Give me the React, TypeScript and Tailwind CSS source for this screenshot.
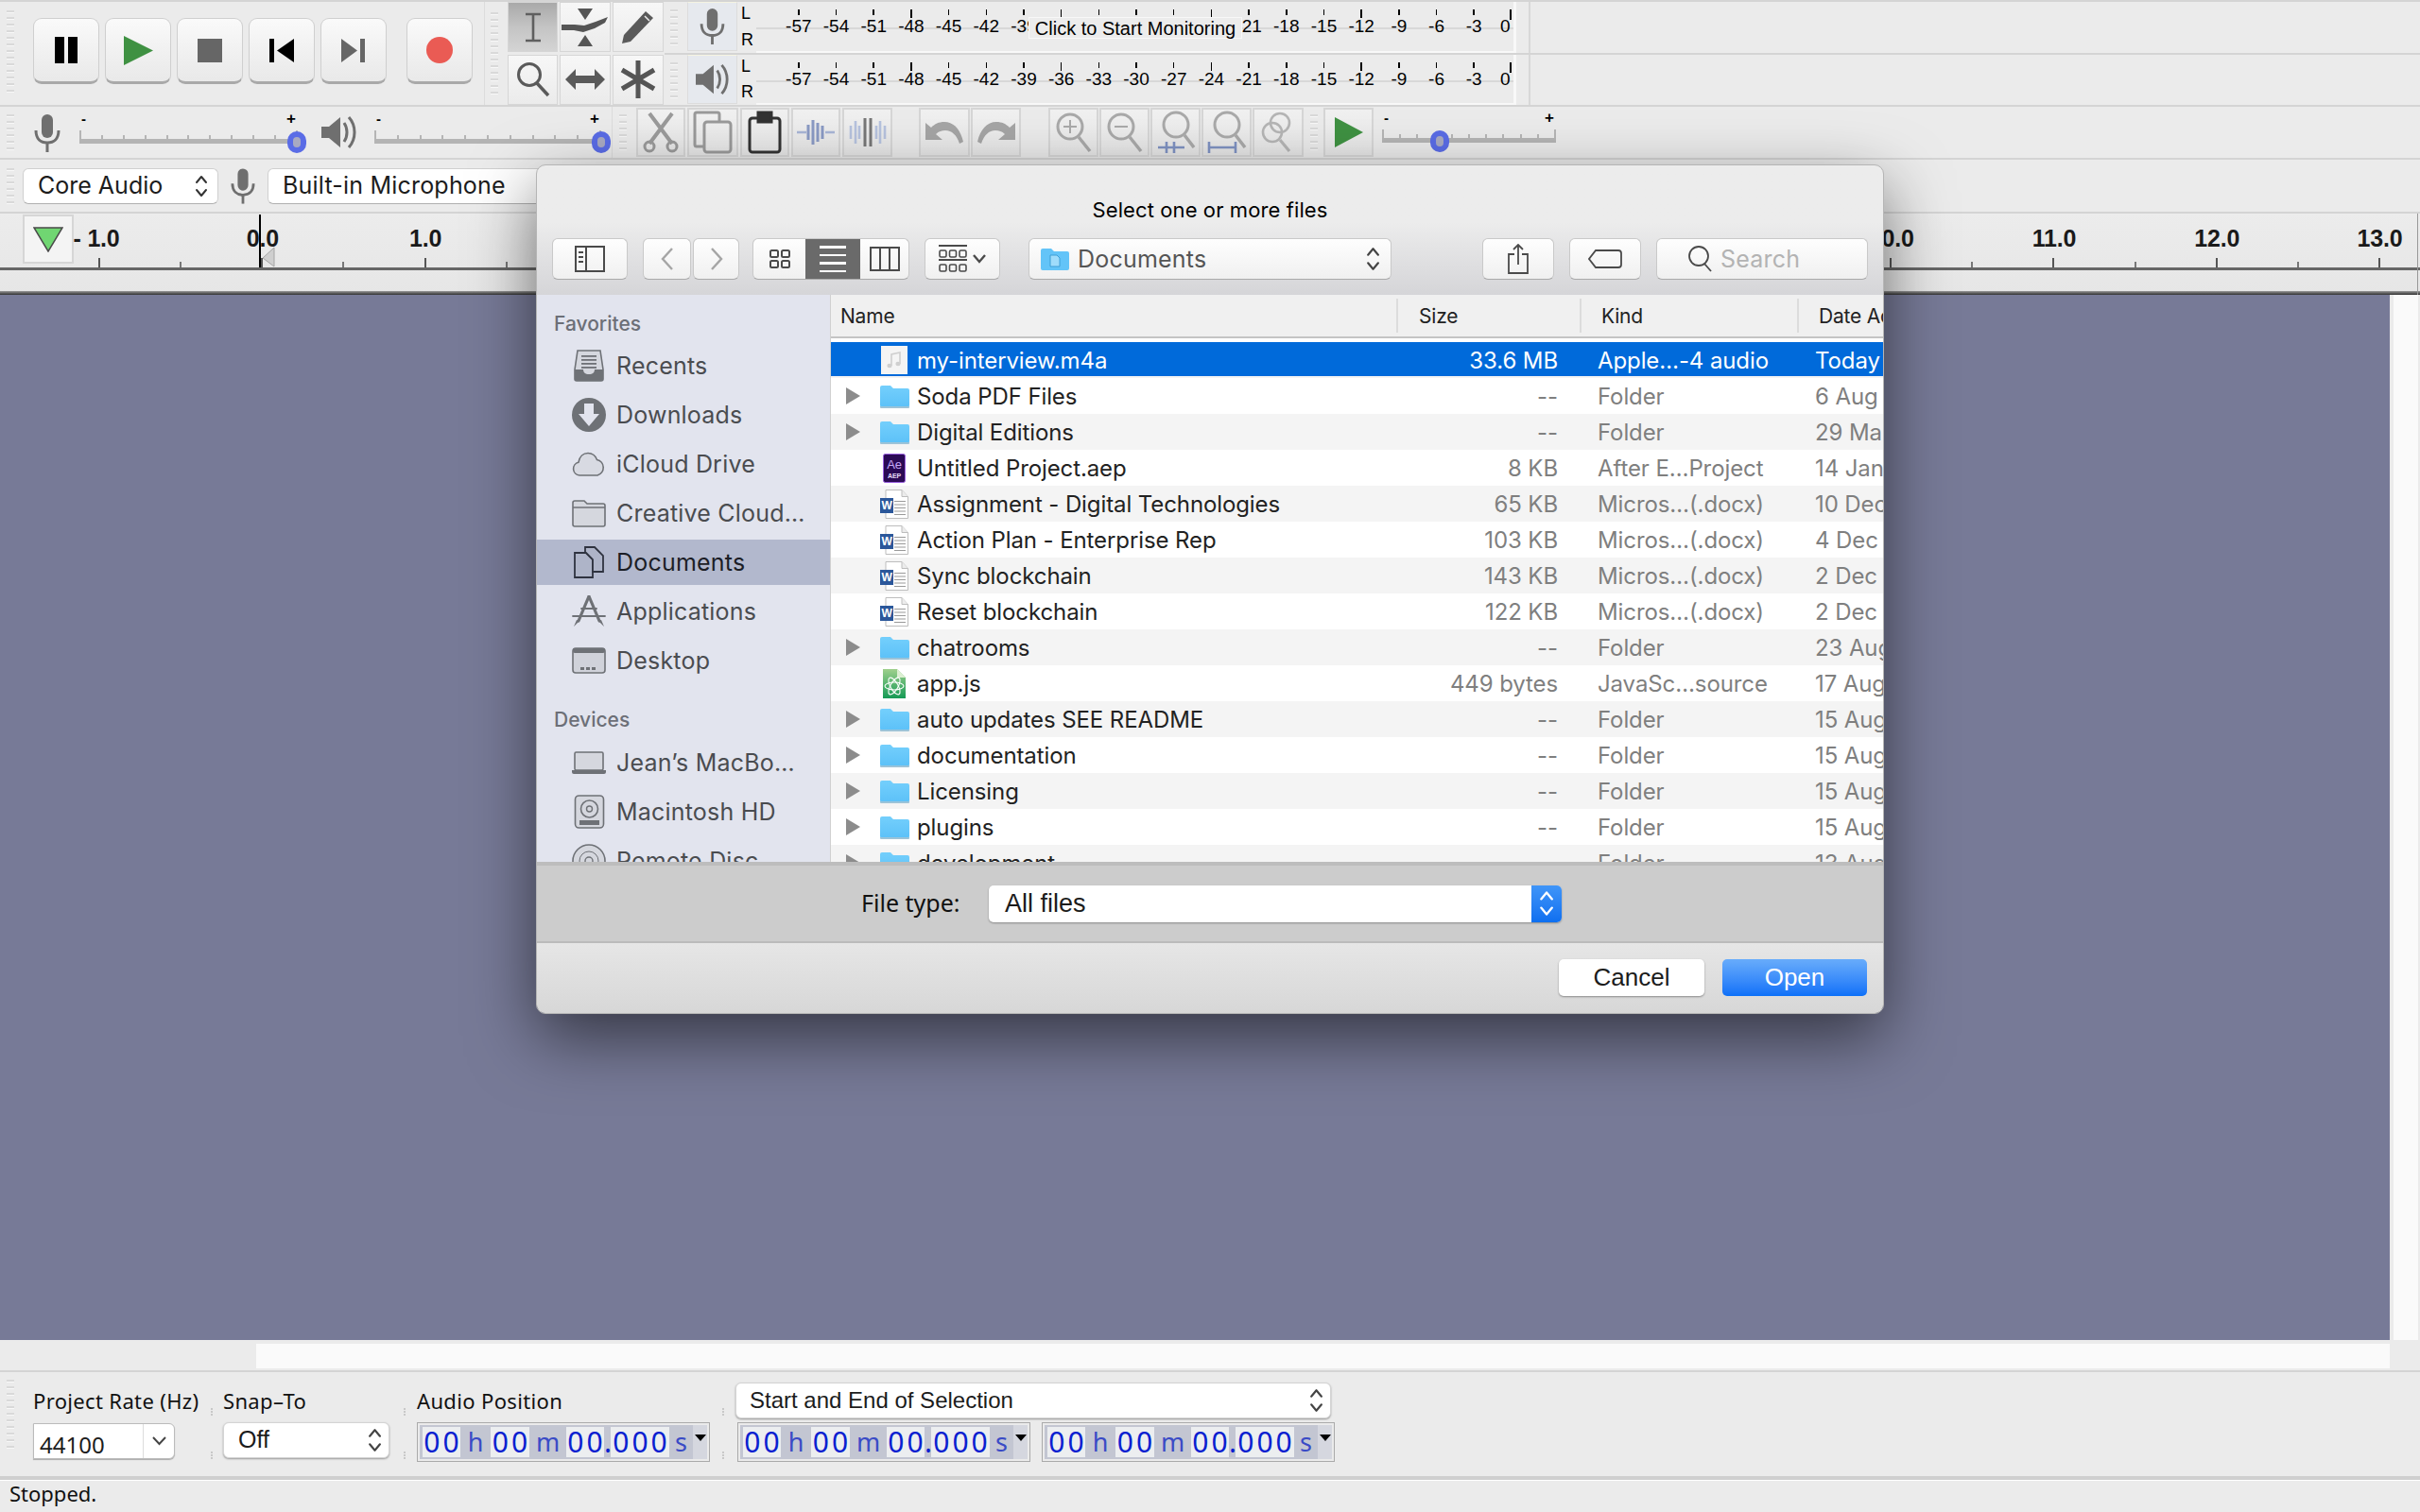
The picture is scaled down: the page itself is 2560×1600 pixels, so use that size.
import React from 'react'

const sans = "font-['Inter',sans-serif]"
const arial = "font-['Liberation_Sans',sans-serif]"
const noto = "font-['Noto_Sans',sans-serif]"

function Grip({ n = 12, className = '' }: { n?: number; className?: string }) {
  return (
    <div className={`flex flex-col gap-[4px] w-[8px] shrink-0 ${className}`}>
      {Array.from({ length: n }).map((_, i) => (
        <div key={i} className="h-[3px] w-[8px] bg-[#d9d9d9] border-b border-[#f8f8f8]" />
      ))}
    </div>
  )
}

function Mic({ w = 28, h = 40, color = '#6f6f6f' }: { w?: number; h?: number; color?: string }) {
  return (
    <svg width={w} height={h} viewBox="0 0 28 40">
      <rect x="8" y="0" width="12" height="25" rx="6" fill={color} />
      <path d="M2 17c0 9 5 13 12 13s12-4 12-13" fill="none" stroke={color} strokeWidth="3" />
      <rect x="12.5" y="29" width="3" height="11" fill={color} />
    </svg>
  )
}

function Speaker({ w = 38, h = 36 }: { w?: number; h?: number }) {
  return (
    <svg width={w} height={h} viewBox="0 0 38 36">
      <path d="M0 12h8l12-10v32L8 24H0z" fill="#6f6f6f" />
      <path d="M24 8c4 6 4 14 0 20" fill="none" stroke="#6f6f6f" strokeWidth="3" />
      <path d="M29 2c8 9 8 23 0 32" fill="none" stroke="#6f6f6f" strokeWidth="3" />
    </svg>
  )
}

function TransportBtn({ children, className = '' }: { children: React.ReactNode; className?: string }) {
  return (
    <div className={`w-[70px] h-[70px] rounded-[9px] border border-[#cfcfcf] border-b-[3px] border-b-[#a9a9a9] bg-gradient-to-b from-[#fafafa] via-[#f1f1f1] to-[#e9e9e9] flex items-center justify-center shrink-0 ${className}`}>
      {children}
    </div>
  )
}

function ToolBtn({ children, active }: { children: React.ReactNode; active?: boolean }) {
  return (
    <div className={`h-[53px] flex items-center justify-center border border-[#d6d6d6] ${active ? 'bg-gradient-to-b from-[#a9a9a9] via-[#c4c4c4] to-[#d4d4d4]' : 'bg-gradient-to-b from-[#f7f7f7] to-[#ebebeb]'}`}>
      {children}
    </div>
  )
}

function EditBtn({ children, w = 'w-[52px]' }: { children: React.ReactNode; w?: string }) {
  return (
    <div className={`${w} h-[52px] shrink-0 flex items-center justify-center border-[2px] border-[#d6d6d6] bg-gradient-to-b from-[#f1f1f1] to-[#e6e6e6]`}>
      {children}
    </div>
  )
}

function Slider({ width, thumb, className = '' }: { width: number; thumb: number; className?: string }) {
  return (
    <div className={`relative h-[52px] shrink-0 ${className}`} style={{ width }}>
      <span className={`absolute left-[2px] top-[2px] text-[15px] font-bold leading-[20px] text-black ${arial}`}>-</span>
      <span className={`absolute right-[2px] top-[2px] text-[17px] font-bold leading-[20px] text-black ${arial}`}>+</span>
      <div className="absolute left-0 right-0 top-[23px] h-[10px] flex justify-between items-end">
        {Array.from({ length: 11 }).map((_, i) => (
          <div key={i} className={`w-[2px] bg-[#b5b5b5] ${i === 0 || i === 10 ? 'h-[9px]' : 'h-[4px]'}`} />
        ))}
      </div>
      <div className="absolute left-0 right-0 top-[33px] h-[5px] bg-[#b4b4b4]" />
      <div className="absolute top-[25px] w-[20px] h-[23px] rounded-full border-[6px] border-[#5a6ce6] bg-[#a9aac2]" style={{ left: thumb - 10 }} />
    </div>
  )
}

const meterLabels = ['-57', '-54', '-51', '-48', '-45', '-42', '-39', '-36', '-33', '-30', '-27', '-24', '-21', '-18', '-15', '-12', '-9', '-6', '-3']
const hiddenByMonitor = ['-36', '-33', '-30', '-27', '-24']

function MeterRow({ icon, monitor }: { icon: React.ReactNode; monitor?: boolean }) {
  return (
    <div className="flex h-[54px] items-stretch">
      <Grip n={6} className="ml-[6px] mr-[10px] self-center" />
      <div className="w-[53px] h-[52px] bg-[#e6e9ee] border border-[#dcdcdc] border-t-[#f5f3e2] flex items-center justify-center shrink-0">{icon}</div>
      <div className={`w-[20px] pl-[4px] flex flex-col justify-between pb-[2px] text-[18px] leading-[24px] text-black shrink-0 ${arial}`}>
        <span>L</span>
        <span>R</span>
      </div>
      <div className="relative w-[804px] border-r-[3px] border-b-[2px] border-[#f8f8f8] shrink-0">
        <div className="absolute left-0 right-0 top-[27px] h-[2px] bg-[#d8d8d8]" />
        <div className="relative flex pl-[25px] pt-[8px]">
          {meterLabels.map((m, i) => (
            <div key={m} className="w-[39.7px] flex flex-col items-center shrink-0">
              <div className={`w-[1.5px] bg-black ${i % 4 === 3 ? 'h-[9px]' : 'h-[6px] mb-[3px]'}`} />
              <span className={`h-[20px] text-[19px] leading-[20px] text-black -mt-[1px] whitespace-nowrap ${arial}`}>
                {monitor && hiddenByMonitor.includes(m) ? '' : m}
              </span>
            </div>
          ))}
          <div className="w-[30px] flex flex-col items-start shrink-0">
            <div className="w-[2px] h-[11px] -mb-[2px] ml-[18px] bg-black" />
            <span className={`text-[19px] leading-[20px] text-black -mt-[1px] ml-[8px] ${arial}`}>0</span>
          </div>
        </div>
        {monitor && (
          <div className={`absolute left-[288px] top-[16px] w-[226px] h-[23px] bg-[#ececec] border border-[#f8f8f8] flex items-center justify-center text-[20px] text-black whitespace-nowrap ${arial}`}>
            Click to Start Monitoring
          </div>
        )}
      </div>
      <div className="w-[15px] border-r-[2px] border-[#d8d8d8] shrink-0" />
    </div>
  )
}

function SelectChevrons({ size = 'h-[26px]', color = '#444' }: { size?: string; color?: string }) {
  return (
    <svg viewBox="0 0 14 26" className={`${size} w-auto shrink-0`}>
      <path d="M2 9l5-6 5 6M2 17l5 6 5-6" fill="none" stroke={color} strokeWidth="2" strokeLinecap="round" strokeLinejoin="round" />
    </svg>
  )
}

const rulerCells: { label?: string }[] = []
for (let i = 0; i < 29; i++) {
  if (i % 2 === 0) {
    const v = i / 2 - 1
    rulerCells.push({ label: v === -1 ? '- 1.0' : `${v}.0` })
  } else rulerCells.push({})
}

function Ruler() {
  return (
    <div className="relative h-[86px] shrink-0 bg-gradient-to-b from-[#ececec] to-[#e6e6e6] overflow-hidden">
      <div className="flex pl-[62px] h-[57px]">
        {rulerCells.map((c, i) => (
          <div key={i} className="w-[86.15px] h-full flex flex-col items-center justify-between shrink-0">
            {c.label ? (
              <span className={`mt-[14px] text-[25px] leading-[24px] font-bold text-[#1a1a1a] whitespace-nowrap tracking-[-0.2px] ${arial} ${c.label === '- 1.0' ? '-ml-[6px]' : 'ml-[1px]'}`}>{c.label}</span>
            ) : (
              <span />
            )}
            <div className={`${c.label ? 'h-[10px] bg-[#555]' : 'h-[6px] bg-[#777]'} w-[2px]`} />
          </div>
        ))}
      </div>
      <div className="h-[3px] bg-[#666]" />
      <div className="absolute left-0 right-0 bottom-0 h-[4px] bg-gradient-to-b from-[#999] to-[#333]" />
      <div className="absolute right-[2px] top-0 bottom-0 w-[1px] bg-[#999]" />
      {/* green play-head button */}
      <div className="absolute left-[24px] top-[1px] w-[54px] h-[52px] border-[2px] border-[#d6d6d6] bg-[#f4f4f4] flex items-center justify-center">
        <svg width="32" height="27" viewBox="0 0 32 27">
          <path d="M1 1h30L16 26z" fill="#70d672" stroke="#4a4a4a" strokeWidth="1.5" />
        </svg>
      </div>
      {/* cursor */}
      <div className="absolute left-[274px] top-[1px] w-[2px] h-[56px] bg-black" />
      <svg className="absolute left-[277px] top-[35px]" width="14" height="22" viewBox="0 0 14 22">
        <path d="M13 1v20L1 12z" fill="#cfcfcf" stroke="#a5a5a5" />
      </svg>
    </div>
  )
}

function Digits({ text, w }: { text: string; w: string }) {
  return (
    <div className={`${w} h-[32px] bg-[#eceef0] shrink-0 flex items-center justify-center text-[30px] leading-[32px] tracking-[3px] pl-[3px] text-[#0a1fd0] ${noto}`}>
      {text}
    </div>
  )
}

function Unit({ text, w }: { text: string; w: string }) {
  return <div className={`${w} shrink-0 text-center text-[27px] leading-[32px] text-[#3a4bc6] ${noto}`}>{text}</div>
}

function Numeric() {
  return (
    <div className="w-[310px] h-[42px] border border-[#aaa] p-[2px] shrink-0">
      <div className="h-full bg-[#c3c6d2] flex items-center pl-[3px] pr-[2px]">
        <Digits text="00" w="w-[40px]" />
        <Unit text="h" w="w-[32px]" />
        <Digits text="00" w="w-[41px]" />
        <Unit text="m" w="w-[39px]" />
        <Digits text="00" w="w-[40px]" />
        <div className={`w-[7px] shrink-0 text-[30px] leading-[32px] text-center text-[#0a1fd0] ${noto}`}>.</div>
        <Digits text="000" w="w-[62px]" />
        <Unit text="s" w="w-[25px]" />
        <div className="w-[15px] h-full bg-[#d5d7df] flex justify-center pt-[10px] shrink-0">
          <div className="w-0 h-0 border-x-[6px] border-x-transparent border-t-[7px] border-t-black" />
        </div>
      </div>
    </div>
  )
}

function SmallSep() {
  return (
    <div className="flex flex-col justify-between h-[54px] w-[2px] mt-[27px] shrink-0">
      <div className="h-[8px] border-l-2 border-dotted border-[#c8c8c8]" />
      <div className="h-[8px] border-l-2 border-dotted border-[#c8c8c8]" />
    </div>
  )
}

/* dialog icons */
function Folder() {
  return (
    <svg width="31" height="25" viewBox="0 0 31 25">
      <defs>
        <linearGradient id="fold" x1="0" y1="0" x2="0" y2="1">
          <stop offset="0" stopColor="#74cffc" />
          <stop offset="1" stopColor="#5cc1f8" />
        </linearGradient>
      </defs>
      <path d="M0 3a2 2 0 0 1 2-2h9l3 3h15a2 2 0 0 1 2 2v16a2 2 0 0 1-2 2H2a2 2 0 0 1-2-2z" fill="url(#fold)" />
      <path d="M0 23h31v1a1 1 0 0 1-1 1H1a1 1 0 0 1-1-1z" fill="#9cc3d8" />
    </svg>
  )
}

function WordIcon() {
  return (
    <svg width="30" height="31" viewBox="0 0 30 31">
      <path d="M6 .5h17l6.5 7v23H6z" fill="#fff" stroke="#bdbdbd" />
      <path d="M23 .5v7h6.5" fill="#ececec" stroke="#bdbdbd" />
      {[12, 15.5, 19, 22.5, 26].map((y) => (
        <rect key={y} x="15" y={y} width="12" height="1" fill="#9a9a9a" />
      ))}
      <rect x="0" y="9" width="14" height="16" fill="#2b579a" />
      <text x="7" y="21" textAnchor="middle" fontSize="12" fontWeight="700" fill="#fff" fontFamily="Liberation Sans">W</text>
    </svg>
  )
}

function AeIcon() {
  return (
    <svg width="24" height="31" viewBox="0 0 24 31">
      <rect x="0.5" y="0.5" width="23" height="30" rx="2" fill="#2b0a55" stroke="#9a5fe0" />
      <text x="12" y="16" textAnchor="middle" fontSize="13" fill="#c6a8f5" fontFamily="Liberation Sans">Ae</text>
      <text x="12" y="26" textAnchor="middle" fontSize="7" fontWeight="700" fill="#e8dcf8" fontFamily="Liberation Sans">AEP</text>
    </svg>
  )
}

function AtomIcon() {
  return (
    <svg width="24" height="31" viewBox="0 0 24 31">
      <defs>
        <linearGradient id="atom" x1="0" y1="0" x2="0" y2="1">
          <stop offset="0" stopColor="#9fd08c" />
          <stop offset="1" stopColor="#159a55" />
        </linearGradient>
      </defs>
      <path d="M0 0h15l9 9v22H0z" fill="url(#atom)" />
      <path d="M15 0l9 9h-9z" fill="#dcefd2" />
      <g fill="none" stroke="#fff" strokeWidth="1.1">
        <ellipse cx="12" cy="18" rx="10" ry="4" />
        <ellipse cx="12" cy="18" rx="10" ry="4" transform="rotate(60 12 18)" />
        <ellipse cx="12" cy="18" rx="10" ry="4" transform="rotate(120 12 18)" />
      </g>
    </svg>
  )
}

function MusicIcon() {
  return (
    <svg width="28" height="30" viewBox="0 0 28 30">
      <rect width="28" height="30" fill="#f4f4f4" />
      <path d="M11 21V9l9-2v12" fill="none" stroke="#cfcfcf" strokeWidth="1.6" />
      <ellipse cx="9" cy="21" rx="2.6" ry="2.2" fill="#cfcfcf" />
      <ellipse cx="18" cy="19" rx="2.6" ry="2.2" fill="#cfcfcf" />
    </svg>
  )
}

type Row = { name: string; size: string; kind: string; date: string; icon: 'folder' | 'word' | 'ae' | 'atom' | 'music' }

const rows: Row[] = [
  { name: 'my-interview.m4a', size: '33.6 MB', kind: 'Apple…-4 audio', date: 'Today', icon: 'music' },
  { name: 'Soda PDF Files', size: '--', kind: 'Folder', date: '6 Aug', icon: 'folder' },
  { name: 'Digital Editions', size: '--', kind: 'Folder', date: '29 Mar', icon: 'folder' },
  { name: 'Untitled Project.aep', size: '8 KB', kind: 'After E…Project', date: '14 Jan', icon: 'ae' },
  { name: 'Assignment - Digital Technologies', size: '65 KB', kind: 'Micros…(.docx)', date: '10 Dec', icon: 'word' },
  { name: 'Action Plan - Enterprise Rep', size: '103 KB', kind: 'Micros…(.docx)', date: '4 Dec', icon: 'word' },
  { name: 'Sync blockchain', size: '143 KB', kind: 'Micros…(.docx)', date: '2 Dec', icon: 'word' },
  { name: 'Reset blockchain', size: '122 KB', kind: 'Micros…(.docx)', date: '2 Dec', icon: 'word' },
  { name: 'chatrooms', size: '--', kind: 'Folder', date: '23 Aug', icon: 'folder' },
  { name: 'app.js', size: '449 bytes', kind: 'JavaSc…source', date: '17 Aug', icon: 'atom' },
  { name: 'auto updates SEE README', size: '--', kind: 'Folder', date: '15 Aug', icon: 'folder' },
  { name: 'documentation', size: '--', kind: 'Folder', date: '15 Aug', icon: 'folder' },
  { name: 'Licensing', size: '--', kind: 'Folder', date: '15 Aug', icon: 'folder' },
  { name: 'plugins', size: '--', kind: 'Folder', date: '15 Aug', icon: 'folder' },
  { name: 'development', size: '--', kind: 'Folder', date: '13 Aug', icon: 'folder' },
]

function FileIcon({ kind }: { kind: Row['icon'] }) {
  if (kind === 'folder') return <Folder />
  if (kind === 'word') return <WordIcon />
  if (kind === 'ae') return <AeIcon />
  if (kind === 'atom') return <AtomIcon />
  return <MusicIcon />
}

const sg = '#6e7176'

const sideIcons: Record<string, React.ReactNode> = {
  Recents: (
    <svg width="34" height="34" viewBox="0 0 34 34">
      <path d="M5 1h24l3 20v10a2 2 0 0 1-2 2H4a2 2 0 0 1-2-2V21z" fill="#d5d7de" stroke={sg} strokeWidth="1.6" />
      <path d="M2 21h9c0 3 2 5 6 5s6-2 6-5h9v10a2 2 0 0 1-2 2H4a2 2 0 0 1-2-2z" fill={sg} />
      {[6, 10, 14, 18].map((y) => (
        <rect key={y} x="9" y={y} width="16" height="1.8" fill={sg} />
      ))}
    </svg>
  ),
  Downloads: (
    <svg width="36" height="36" viewBox="0 0 36 36">
      <circle cx="18" cy="18" r="18" fill={sg} />
      <path d="M13 6h10v11h6L18 30 7 17h6z" fill="#e2e4ee" />
    </svg>
  ),
  'iCloud Drive': (
    <svg width="36" height="26" viewBox="0 0 36 26">
      <path d="M8 25a7 7 0 0 1-1-13.8C8 5 12 1.5 17 1.5c5 0 8 3 9.5 7A8.5 8.5 0 0 1 27 25z" fill="#d8dae2" stroke={sg} strokeWidth="1.6" />
    </svg>
  ),
  'Creative Cloud…': (
    <svg width="36" height="29" viewBox="0 0 36 29">
      <path d="M1 3a2 2 0 0 1 2-2h10l3 3h17a2 2 0 0 1 2 2v20a2 2 0 0 1-2 2H3a2 2 0 0 1-2-2z" fill="#d5d7de" stroke={sg} strokeWidth="1.6" />
      <path d="M1 8h34" stroke={sg} strokeWidth="1.4" />
    </svg>
  ),
  Documents: (
    <svg width="33" height="34" viewBox="0 0 33 34">
      <path d="M1 7h12l7 7v19H1z" fill="#aeb4c8" stroke="#2f3340" strokeWidth="1.8" />
      <path d="M12 1h10l9 9v17H20V14l-7-7h-1z" fill="#aeb4c8" stroke="#2f3340" strokeWidth="1.8" />
    </svg>
  ),
  Applications: (
    <svg width="36" height="34" viewBox="0 0 36 34">
      <g fill="none" stroke={sg} strokeLinecap="round">
        <path d="M18 1L7 27M18 1l11 26" strokeWidth="3.2" />
        <path d="M1 22h34" strokeWidth="1.8" />
        <path d="M10 14h16" strokeWidth="1.8" />
      </g>
      <path d="M2 33l3-7 3 1zM34 33l-3-7-3 1z" fill={sg} />
    </svg>
  ),
  Desktop: (
    <svg width="36" height="28" viewBox="0 0 36 28">
      <rect x="1" y="1" width="34" height="26" rx="3" fill="#d0d2da" stroke={sg} strokeWidth="1.6" />
      <rect x="1" y="1" width="34" height="5" rx="2" fill={sg} />
      <rect x="9" y="21" width="4" height="3" fill={sg} />
      <rect x="15" y="21" width="4" height="3" fill={sg} />
      <rect x="21" y="21" width="4" height="3" fill={sg} />
    </svg>
  ),
  'Jean’s MacBo…': (
    <svg width="36" height="24" viewBox="0 0 36 24">
      <rect x="3" y="1" width="30" height="19" rx="1.5" fill="#d5d7de" stroke={sg} strokeWidth="1.6" />
      <path d="M0 20h36v2a2 2 0 0 1-2 2H2a2 2 0 0 1-2-2z" fill={sg} />
    </svg>
  ),
  'Macintosh HD': (
    <svg width="33" height="36" viewBox="0 0 33 36">
      <rect x="1.5" y="1" width="30" height="34" rx="4" fill="#d5d7de" stroke={sg} strokeWidth="1.6" />
      <circle cx="16.5" cy="15" r="9" fill="none" stroke={sg} strokeWidth="1.6" />
      <circle cx="16.5" cy="15" r="3" fill="none" stroke={sg} strokeWidth="1.4" />
      <rect x="6" y="27" width="21" height="5" fill={sg} />
    </svg>
  ),
  'Remote Disc': (
    <svg width="36" height="36" viewBox="0 0 36 36">
      <circle cx="18" cy="18" r="17" fill="#d5d7de" stroke={sg} strokeWidth="1.6" />
      <circle cx="18" cy="18" r="10" fill="none" stroke={sg} strokeWidth="1" />
      <circle cx="18" cy="18" r="4" fill="none" stroke={sg} strokeWidth="1.4" />
    </svg>
  ),
}

function SideItem({ name, active }: { name: string; active?: boolean }) {
  return (
    <div className="h-[52px] flex items-center shrink-0">
      <div className={`h-[48px] w-full flex items-center ${active ? 'bg-[#b2b8cd] text-[#1c1e26]' : 'text-[#4a4c50]'}`}>
        <div className="w-[36px] ml-[37px] flex justify-center">{sideIcons[name]}</div>
        <span className={`ml-[11px] mt-[1px] text-[25px] tracking-[0.2px] whitespace-nowrap ${sans}`}>{name}</span>
      </div>
    </div>
  )
}

const dlgBtn = 'h-[44px] rounded-[6px] border border-[#c9c9c9] border-b-[#aaa] bg-gradient-to-b from-[#fefefe] to-[#f0f0f0] flex items-center justify-center shrink-0'

function FileDialog() {
  return (
    <div className={`absolute left-[568px] top-[175px] w-[1424px] h-[897px] rounded-[9px] overflow-hidden flex flex-col bg-[#ececec] shadow-[0_25px_70px_0_rgba(0,0,0,0.56)] outline outline-1 outline-[#b5b5b5] ${sans}`}>
      {/* title + toolbar */}
      <div className="h-[137px] shrink-0 bg-gradient-to-b from-[#ececec] from-[44%] to-[#d5d5d8] flex flex-col">
        <div className="h-[77px] shrink-0 pt-[33px] text-center text-[22px] leading-[28px] tracking-[0.1px] text-black">Select one or more files</div>
        <div className="flex pl-[16px]">
          <div className={`${dlgBtn} w-[80px]`}>
            <svg width="32" height="28" viewBox="0 0 32 28" fill="none" stroke="#4a4a4a" strokeWidth="2">
              <rect x="1" y="1" width="30" height="26" />
              <path d="M12 1v26M4 7h5M4 12h5M4 17h5" />
            </svg>
          </div>
          <div className={`${dlgBtn} w-[51px] ml-[16px]`}>
            <svg width="14" height="26" viewBox="0 0 14 26" fill="none" stroke="#a5a5a5" strokeWidth="2.4">
              <path d="M12 2L2 13l10 11" />
            </svg>
          </div>
          <div className={`${dlgBtn} w-[49px] ml-[2px]`}>
            <svg width="14" height="26" viewBox="0 0 14 26" fill="none" stroke="#a5a5a5" strokeWidth="2.4">
              <path d="M2 2l10 11L2 24" />
            </svg>
          </div>
          <div className={`${dlgBtn} w-[166px] ml-[14px] overflow-hidden !justify-start`}>
            <div className="w-[55px] flex justify-center">
              <svg width="22" height="22" viewBox="0 0 22 22" fill="none" stroke="#4a4a4a" strokeWidth="2">
                <rect x="1" y="2" width="8" height="7" rx="1.5" />
                <rect x="13" y="2" width="8" height="7" rx="1.5" />
                <rect x="1" y="13" width="8" height="7" rx="1.5" />
                <rect x="13" y="13" width="8" height="7" rx="1.5" />
              </svg>
            </div>
            <div className="w-[58px] h-full bg-[#6a6a6a] flex flex-col items-center justify-center gap-[6px]">
              <div className="w-[28px] h-[2.5px] bg-white" />
              <div className="w-[28px] h-[2.5px] bg-white" />
              <div className="w-[28px] h-[2.5px] bg-white" />
              <div className="w-[28px] h-[2.5px] bg-white" />
            </div>
            <div className="flex-1 flex justify-center">
              <svg width="32" height="26" viewBox="0 0 32 26" fill="none" stroke="#4a4a4a" strokeWidth="2">
                <rect x="1" y="1" width="30" height="24" />
                <path d="M11 1v24M21 1v24" />
              </svg>
            </div>
          </div>
          <div className={`${dlgBtn} w-[80px] ml-[16px] gap-[6px]`}>
            <svg width="30" height="30" viewBox="0 0 30 30" fill="none" stroke="#4a4a4a" strokeWidth="1.6">
              <path d="M0 1h30" strokeWidth="2" />
              <rect x="1" y="6" width="7" height="7" rx="1.5" />
              <rect x="11.5" y="6" width="7" height="7" rx="1.5" />
              <rect x="22" y="6" width="7" height="7" rx="1.5" />
              <path d="M0 16h30" strokeWidth="2" />
              <rect x="1" y="21" width="7" height="7" rx="1.5" />
              <rect x="11.5" y="21" width="7" height="7" rx="1.5" />
              <rect x="22" y="21" width="7" height="7" rx="1.5" />
            </svg>
            <svg width="14" height="10" viewBox="0 0 14 10" fill="none" stroke="#4a4a4a" strokeWidth="2.4">
              <path d="M1 1l6 7 6-7" />
            </svg>
          </div>
          <div className={`${dlgBtn} w-[384px] ml-[30px] !justify-start pl-[12px]`}>
            <svg width="30" height="24" viewBox="0 0 30 24">
              <path d="M0 3a2 2 0 0 1 2-2h9l3 3h14a2 2 0 0 1 2 2v16a2 2 0 0 1-2 2H2a2 2 0 0 1-2-2z" fill="#63c4f8" />
              <path d="M10 8h7l3 3v9H10z" fill="#9fdcfb" stroke="#3f9fd6" />
            </svg>
            <span className="ml-[9px] mt-[2px] text-[25px] text-[#555] tracking-[0.2px]">Documents</span>
            <div className="ml-auto mr-[11px]">
              <SelectChevrons size="h-[28px]" />
            </div>
          </div>
          <div className={`${dlgBtn} w-[76px] ml-[96px]`}>
            <svg width="22" height="32" viewBox="0 0 22 32" fill="none" stroke="#4a4a4a" strokeWidth="1.8">
              <path d="M7 11H1v20h20V11h-6" />
              <path d="M11 22V1M6 6l5-5 5 5" />
            </svg>
          </div>
          <div className={`${dlgBtn} w-[76px] ml-[16px]`}>
            <svg width="36" height="20" viewBox="0 0 36 20" fill="none" stroke="#4a4a4a" strokeWidth="1.8">
              <path d="M8 1h24a3 3 0 0 1 3 3v12a3 3 0 0 1-3 3H8l-7-9z" />
            </svg>
          </div>
          <div className={`${dlgBtn} w-[224px] ml-[16px] !justify-start pl-[33px]`}>
            <svg width="26" height="28" viewBox="0 0 26 28" fill="none" stroke="#4a4a4a" strokeWidth="1.8">
              <circle cx="11" cy="11" r="10" />
              <path d="M17 19l7 8" />
            </svg>
            <span className="ml-[8px] mt-[2px] text-[25px] text-[#b3b3b3] tracking-[0.2px]">Search</span>
          </div>
        </div>
      </div>

      {/* browser */}
      <div className="h-[600px] shrink-0 flex">
        <div className="w-[311px] shrink-0 bg-[#e2e4ee] border-r-[1px] border-[#d0d0d0] overflow-hidden flex flex-col">
          <div className="h-[49px] shrink-0 pl-[18px] pt-[18px] text-[21px] leading-[26px] font-medium text-[#6c6f77]">Favorites</div>
          {['Recents', 'Downloads', 'iCloud Drive', 'Creative Cloud…'].map((n) => (
            <SideItem key={n} name={n} />
          ))}
          <SideItem name="Documents" active />
          <SideItem name="Applications" />
          <SideItem name="Desktop" />
          <div className="h-[56px] shrink-0 pl-[18px] pt-[24px] text-[21px] leading-[26px] font-medium text-[#6c6f77]">Devices</div>
          <SideItem name="Jean’s MacBo…" />
          <SideItem name="Macintosh HD" />
          <SideItem name="Remote Disc" />
        </div>
        <div className="flex-1 overflow-hidden bg-white">
          <div className="h-[44px] bg-[#f0f0f0] grid grid-cols-[598px_194px_230px_1fr] items-center text-[21px] text-[#222] tracking-[-0.2px]">
            <div className="pl-[10px] pt-[2px]">Name</div>
            <div className="pl-[22px] pt-[2px] h-[36px] flex items-center border-l-2 border-[#dcdcdc]">Size</div>
            <div className="pl-[21px] pt-[2px] h-[36px] flex items-center border-l-2 border-[#dcdcdc]">Kind</div>
            <div className="pl-[21px] pt-[2px] h-[36px] flex items-center border-l-2 border-[#dcdcdc] whitespace-nowrap">Date Added</div>
          </div>
          <div className="h-[2px] bg-[#c4c4c4]" />
          <div className="h-[4px] bg-white" />
          {rows.map((r, i) => {
            const sel = i === 0
            return (
              <div key={r.name} className={`h-[38px] ${i % 2 === 1 ? 'bg-white' : 'bg-[#f4f4f4]'}`}>
                <div className={`grid grid-cols-[598px_194px_230px_1fr] items-center text-[24px] leading-[36px] tracking-[-0.1px] ${sel ? 'h-[36px] bg-[#006ada] text-white' : 'h-[38px] text-[#7f7f7f]'}`}>
                  <div className={`flex items-center ${sel ? 'text-white' : 'text-[#222]'}`}>
                    <div className="w-[51px] pl-[16px] shrink-0">
                      {r.icon === 'folder' && <div className="w-0 h-0 border-y-[9px] border-y-transparent border-l-[15px] border-l-[#8c8c8c]" />}
                    </div>
                    <div className="w-[32px] flex justify-center shrink-0">
                      <FileIcon kind={r.icon} />
                    </div>
                    <span className="ml-[8px] mt-[2px] whitespace-nowrap">{r.name}</span>
                  </div>
                  <div className="text-right pr-[23px] mt-[2px] whitespace-nowrap">{r.size}</div>
                  <div className="pl-[19px] mt-[2px] whitespace-nowrap">{r.kind}</div>
                  <div className="pl-[19px] mt-[2px] whitespace-nowrap">{r.date}</div>
                </div>
              </div>
            )
          })}
        </div>
      </div>

      {/* file type */}
      <div className="h-[86px] shrink-0 bg-[#cccccc] border-t-[4px] border-[#bdbdbd] border-b-[2px] border-b-[#bbbbbb] flex items-center pl-[343px]">
        <span className={`w-[135px] text-[25px] text-[#111] ${noto}`}>File type:</span>
        <div className="w-[606px] h-[39px] rounded-[5px] bg-white shadow-[0_1px_2px_#8a8a8a] flex overflow-hidden">
          <span className={`flex-1 pl-[17px] text-[27px] leading-[38px] text-[#1c1c1c] ${arial}`}>All files</span>
          <div className="w-[32px] bg-gradient-to-b from-[#3f95f8] to-[#0d6ff0] flex items-center justify-center">
            <SelectChevrons size="h-[30px]" color="#fff" />
          </div>
        </div>
      </div>
      {/* buttons */}
      <div className="flex-1 bg-gradient-to-b from-[#e6e6e6] to-[#d7d7d7] flex justify-end items-start pt-[17px] pr-[17px] gap-[19px]">
        <div className={`w-[154px] h-[39px] rounded-[5px] bg-white shadow-[0_1px_2px_#8a8a8a] flex items-center justify-center text-[26px] text-[#1c1c1c] ${arial}`}>Cancel</div>
        <div className={`w-[153px] h-[39px] rounded-[5px] bg-gradient-to-b from-[#68acfb] to-[#0a70f8] flex items-center justify-center text-[26px] text-white ${arial}`}>Open</div>
      </div>
    </div>
  )
}

export default function App() {
  return (
    <div className="relative w-[2560px] h-[1600px] overflow-hidden bg-[#ebebeb] flex flex-col">
      {/* transport, tools, meters */}
      <div className="h-[113px] shrink-0 flex border-t-[2px] border-b-[2px] border-[#d4d4d4]">
        <div className="w-[513px] shrink-0 border-r border-[#dcdcdc] flex items-center pb-[5px]">
          <Grip n={13} className="ml-[7px] mr-[20px]" />
          <div className="flex gap-[6px]">
            <TransportBtn>
              <svg width="26" height="28" viewBox="0 0 26 28">
                <rect x="1" y="0" width="10" height="28" fill="#000" />
                <rect x="15" y="0" width="10" height="28" fill="#000" />
              </svg>
            </TransportBtn>
            <TransportBtn>
              <svg width="32" height="31" viewBox="0 0 32 31">
                <path d="M1 0l31 15.5L1 31z" fill="#3f9142" />
              </svg>
            </TransportBtn>
            <TransportBtn>
              <div className="w-[26px] h-[25px] bg-[#666]" />
            </TransportBtn>
            <TransportBtn>
              <svg width="26" height="25" viewBox="0 0 26 25">
                <rect x="0" y="0" width="5" height="25" fill="#000" />
                <path d="M26 0v25L8 12.5z" fill="#000" />
              </svg>
            </TransportBtn>
            <TransportBtn>
              <svg width="26" height="25" viewBox="0 0 26 25">
                <path d="M0 0v25l17-12.5z" fill="#666" />
                <rect x="20" y="0" width="5" height="25" fill="#666" />
              </svg>
            </TransportBtn>
            <TransportBtn className="ml-[15px]">
              <div className="w-[28px] h-[28px] rounded-full bg-[#ea5b54]" />
            </TransportBtn>
          </div>
        </div>
        <div className="w-[190px] shrink-0 flex">
          <Grip n={13} className="ml-[6px] mr-[10px] self-center" />
          <div className="grid grid-cols-[53px_54px_54px] gap-x-[2px] gap-y-[2px]">
            <ToolBtn active>
              <svg width="18" height="32" viewBox="0 0 18 32" fill="none" stroke="#5f5f5f" strokeWidth="2.6">
                <path d="M1 2h16M1 30h16M9 2v28" />
              </svg>
            </ToolBtn>
            <ToolBtn>
              <svg width="50" height="44" viewBox="0 0 50 44">
                <path d="M17 2h16l-8 12zM17 42h16l-8-12z" fill="#555" />
                <path d="M0 19h14l10 1 12-4 13-5-3 6-11 6-12 4-10-2H0z" fill="#555" />
              </svg>
            </ToolBtn>
            <ToolBtn>
              <svg width="36" height="36" viewBox="0 0 36 36">
                <path d="M26 1l8 7L10 33l-9 2 2-9z" fill="#5a5a5a" />
                <path d="M25 6l5 5" stroke="#eee" strokeWidth="1.5" />
              </svg>
            </ToolBtn>
            <ToolBtn>
              <svg width="36" height="38" viewBox="0 0 36 38" fill="none" stroke="#5a5a5a">
                <circle cx="14" cy="14" r="11.5" strokeWidth="3" />
                <path d="M22 23l12 13" strokeWidth="3.5" />
              </svg>
            </ToolBtn>
            <ToolBtn>
              <svg width="42" height="24" viewBox="0 0 42 24">
                <path d="M0 12L11 1v7h20V1l11 11-11 11v-7H11v7z" fill="#5a5a5a" />
              </svg>
            </ToolBtn>
            <ToolBtn>
              <svg width="38" height="40" viewBox="0 0 38 40" fill="none" stroke="#555" strokeWidth="5">
                <path d="M19 0v40M2 10l34 20M36 10L2 30" />
              </svg>
            </ToolBtn>
          </div>
        </div>
        <div className="flex-1 flex flex-col min-w-0">
          <div className="border-b-[2px] border-[#d4d4d4]">
            <MeterRow icon={<Mic w={27} h={38} />} monitor />
          </div>
          <MeterRow icon={<Speaker w={36} h={36} />} />
        </div>
      </div>

      {/* mixer + edit */}
      <div className="h-[56px] shrink-0 flex border-b-[2px] border-[#d4d4d4]">
        <div className="w-[648px] shrink-0 flex items-center border-r border-[#dcdcdc]">
          <Grip n={6} className="ml-[7px] mr-[21px]" />
          <div className="mr-[20px] -mb-[2px]">
            <Mic w={28} h={40} />
          </div>
          <Slider width={231} thumb={230} />
          <div className="ml-[25px] mr-[18px]">
            <Speaker w={38} h={36} />
          </div>
          <Slider width={240} thumb={240} />
        </div>
        <Grip n={6} className="ml-[7px] mr-[10px] self-center" />
        <div className="flex gap-[2px] shrink-0 pt-[1px]">
          <EditBtn>
            <svg width="40" height="44" viewBox="0 0 40 44" fill="none" stroke="#9a9a9a" strokeWidth="3.6">
              <path d="M8 2l24 32M32 2L8 34" strokeWidth="4" />
              <circle cx="8" cy="37" r="5" strokeWidth="3" />
              <circle cx="32" cy="37" r="5" strokeWidth="3" />
            </svg>
          </EditBtn>
          <EditBtn w="w-[54px]">
            <svg width="42" height="46" viewBox="0 0 42 46" fill="none" stroke="#9a9a9a" strokeWidth="3">
              <rect x="12" y="12" width="28" height="32" rx="3" />
              <path d="M12 38H4a2 2 0 0 1-2-2V4a2 2 0 0 1 2-2h22a2 2 0 0 1 2 2v8" />
            </svg>
          </EditBtn>
          <EditBtn>
            <svg width="36" height="46" viewBox="0 0 36 46" fill="none" stroke="#333" strokeWidth="3">
              <rect x="2" y="8" width="32" height="36" rx="3" />
              <rect x="11" y="2" width="14" height="10" fill="#333" />
            </svg>
          </EditBtn>
          <EditBtn>
            <svg width="40" height="30" viewBox="0 0 40 30" fill="none" stroke="#a8b5d6" strokeWidth="2.6">
              <path d="M0 15h10M30 15h10" />
              <path d="M12 7v16M17 2v26M22 5v20M27 8v14" stroke="#8a9ac4" strokeWidth="3" />
            </svg>
          </EditBtn>
          <EditBtn w="w-[53px]">
            <svg width="42" height="30" viewBox="0 0 42 30" fill="none" stroke="#b6c2de" strokeWidth="2.6">
              <path d="M3 8v14M8 3v24M12 8v14M30 8v14M34 3v24M39 8v14" />
              <path d="M18 0v30M24 0v30" stroke="#777" strokeWidth="3" />
            </svg>
          </EditBtn>
        </div>
        <div className="flex ml-[28px] gap-[1px] shrink-0 pt-[1px]">
          <EditBtn w="w-[54px]">
            <svg width="40" height="28" viewBox="0 0 40 28">
              <path d="M0 4v18h18l-7-6c3-3 6-4 10-4 7 0 12 5 15 14l4-2C37 11 30 3 20 3c-6 0-10 2-14 6z" fill="#a5a5a5" />
            </svg>
          </EditBtn>
          <EditBtn w="w-[53px]">
            <svg width="40" height="28" viewBox="0 0 40 28">
              <path d="M40 4v18H22l7-6c-3-3-6-4-10-4-7 0-12 5-15 14l-4-2C3 11 10 3 20 3c6 0 10 2 14 6z" fill="#a5a5a5" />
            </svg>
          </EditBtn>
        </div>
        <div className="flex ml-[29px] gap-[1px] shrink-0 pt-[1px]">
          <EditBtn w="w-[53px]">
            <svg width="40" height="44" viewBox="0 0 40 44" fill="none" stroke="#a9a9a9" strokeWidth="3">
              <circle cx="16" cy="16" r="13" />
              <path d="M25 27l12 15" strokeWidth="3.5" />
              <path d="M9 16h14M16 9v14" strokeWidth="2" />
            </svg>
          </EditBtn>
          <EditBtn w="w-[53px]">
            <svg width="40" height="44" viewBox="0 0 40 44" fill="none" stroke="#a9a9a9" strokeWidth="3">
              <circle cx="16" cy="16" r="13" />
              <path d="M25 27l12 15" strokeWidth="3.5" />
              <path d="M9 16h14" strokeWidth="2" />
            </svg>
          </EditBtn>
          <EditBtn w="w-[53px]">
            <svg width="44" height="46" viewBox="0 0 44 46" fill="none" stroke="#a9a9a9" strokeWidth="3">
              <circle cx="22" cy="15" r="13" />
              <path d="M31 26l10 13" strokeWidth="3.5" />
              <path d="M3 39h28M12 33v12M20 33v12" stroke="#7f92c2" strokeWidth="2.6" />
            </svg>
          </EditBtn>
          <EditBtn w="w-[53px]">
            <svg width="44" height="46" viewBox="0 0 44 46" fill="none" stroke="#a9a9a9" strokeWidth="3">
              <circle cx="22" cy="15" r="13" />
              <path d="M31 26l10 13" strokeWidth="3.5" />
              <path d="M3 33v12M31 33v12M3 39h28" stroke="#7f92c2" strokeWidth="2.6" />
            </svg>
          </EditBtn>
          <EditBtn w="w-[54px]">
            <svg width="40" height="44" viewBox="0 0 40 44" fill="none" stroke="#b5b5b5" strokeWidth="2.6">
              <circle cx="22" cy="12" r="10" />
              <circle cx="14" cy="22" r="10" />
              <path d="M22 30l10 12" strokeWidth="3.2" />
            </svg>
          </EditBtn>
        </div>
        <Grip n={6} className="ml-[7px] mr-[6px] self-center" />
        <div className="pt-[1px] shrink-0">
          <EditBtn w="w-[53px]">
            <svg width="30" height="32" viewBox="0 0 30 32">
              <path d="M0 0l30 16L0 32z" fill="#3f9142" />
            </svg>
          </EditBtn>
        </div>
        <Slider width={184} thumb={61} className="ml-[9px]" />
      </div>

      {/* device row */}
      <div className="h-[57px] shrink-0 flex items-center border-b-[2px] border-[#d4d4d4]">
        <Grip n={6} className="ml-[7px] mr-[9px]" />
        <div className={`w-[207px] h-[38px] shrink-0 rounded-[6px] bg-white border border-[#d0d0d0] border-b-[#b0b0b0] flex items-center pl-[15px] pr-[10px] text-[25px] text-[#1c1c1c] ${sans}`}>
          <span className="mt-[1px]">Core Audio</span>
          <div className="ml-auto">
            <SelectChevrons size="h-[26px]" color="#333" />
          </div>
        </div>
        <div className="mx-[13px]">
          <Mic w={26} h={38} />
        </div>
        <div className={`w-[400px] h-[38px] shrink-0 rounded-[6px] bg-white border border-[#d0d0d0] border-b-[#b0b0b0] flex items-center pl-[15px] text-[25px] text-[#1c1c1c] tracking-[0.2px] ${sans}`}>
          <span className="mt-[1px]">Built-in Microphone</span>
        </div>
      </div>

      <Ruler />

      {/* track area */}
      <div className="flex-1 flex">
        <div className="w-[2528px] bg-[#777a97]" />
        <div className="w-[26px] ml-[4px] bg-[#fafafa]" />
      </div>

      {/* horizontal scroll */}
      <div className="h-[34px] shrink-0 flex pt-[4px] border-b-[2px] border-[#d4d4d4]">
        <div className="w-[271px]" />
        <div className="w-[2257px] h-[26px] bg-[#fafafa]" />
      </div>

      {/* selection bar */}
      <div className={`h-[114px] shrink-0 flex border-b-[4px] border-[#cfcfcf] pt-[11px] ${noto}`}>
        <Grip n={11} className="ml-[7px] mr-[20px] -mt-[3px]" />
        <div className="w-[188px] shrink-0 flex flex-col gap-[5px]">
          <div className="h-[38px] flex items-center text-[22px] tracking-[0.35px] text-[#111] whitespace-nowrap">Project Rate (Hz)</div>
          <div className="w-[150px] h-[38px] flex bg-white border border-[#bbb] rounded-r-[6px] shadow-[0_1px_1px_#aaa]">
            <div className="w-[116px] pl-[6px] pt-[4px] text-[24px] leading-[36px] text-[#1c1c1c] border-r border-[#ddd]">44100</div>
            <div className="flex-1 flex items-center justify-center">
              <svg width="15" height="10" viewBox="0 0 15 10" fill="none" stroke="#444" strokeWidth="2">
                <path d="M1 1l6.5 7L14 1" />
              </svg>
            </div>
          </div>
        </div>
        <SmallSep />
        <div className="w-[191px] ml-[11px] shrink-0 flex flex-col gap-[4px]">
          <div className="h-[38px] flex items-center text-[22px] tracking-[0.35px] text-[#111] whitespace-nowrap">Snap–To</div>
          <div className={`w-[176px] h-[38px] bg-white rounded-[6px] shadow-[0_1px_2px_#999] border border-[#d4d4d4] flex items-center pl-[15px] pr-[7px] text-[25px] text-[#1c1c1c] ${arial}`}>
            <span>Off</span>
            <div className="ml-auto">
              <SelectChevrons size="h-[28px]" color="#444" />
            </div>
          </div>
        </div>
        <SmallSep />
        <div className="w-[323px] ml-[12px] shrink-0 flex flex-col gap-[4px]">
          <div className="h-[38px] flex items-center text-[22px] tracking-[0.35px] text-[#111] whitespace-nowrap">Audio Position</div>
          <Numeric />
        </div>
        <SmallSep />
        <div className="ml-[12px] shrink-0 flex flex-col gap-[4px]">
          <div className={`w-[630px] h-[38px] bg-white rounded-[6px] shadow-[0_1px_2px_#999] border border-[#d4d4d4] flex items-center pl-[14px] pr-[7px] text-[24px] text-[#1c1c1c] ${arial}`}>
            <span>Start and End of Selection</span>
            <div className="ml-auto">
              <SelectChevrons size="h-[28px]" color="#444" />
            </div>
          </div>
          <div className="flex gap-[12px] ml-[2px]">
            <Numeric />
            <Numeric />
          </div>
        </div>
      </div>

      {/* status */}
      <div className={`h-[34px] shrink-0 border-t border-white pl-[10px] text-[22px] leading-[26px] text-[#111] ${noto}`}>Stopped.</div>

      <FileDialog />
    </div>
  )
}
